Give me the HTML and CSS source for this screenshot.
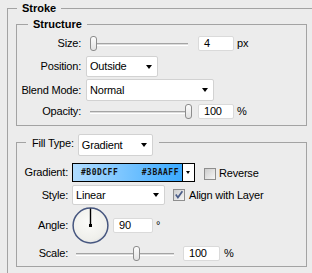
FILE: index.html
```html
<!DOCTYPE html>
<html lang="en">
<head>
    <meta charset="UTF-8">
    <title>Stroke</title>
    <link rel="stylesheet" href="styles.css">
</head>
<body>
    <fieldset class="group outer">
        <legend class="title outer-title">Stroke</legend>

        <fieldset class="group structure">
            <legend class="title structure-title">Structure</legend>

            <div class="row h-size">
                <label class="lbl">Size:</label>
                <div class="slider"><span class="thumb" style="left:0px"></span></div>
                <div class="field">4</div>
                <span class="unit">px</span>
            </div>
            <div class="row h-pos">
                <label class="lbl">Position:</label>
                <div class="select sel-pos">Outside</div>
            </div>
            <div class="row h-blend">
                <label class="lbl">Blend Mode:</label>
                <div class="select sel-blend">Normal</div>
            </div>
            <div class="row h-opacity">
                <label class="lbl">Opacity:</label>
                <div class="slider"><span class="thumb" style="left:95px"></span></div>
                <div class="field">100</div>
                <span class="unit">%</span>
            </div>
        </fieldset>

        <fieldset class="group fill">
            <legend class="fill-legend">
                <label class="fill-lbl">Fill Type:</label>
                <div class="select sel-fill">Gradient</div>
            </legend>

            <div class="row h-grad">
                <label class="lbl">Gradient:</label>
                <div class="gradient">
                    <div class="grad-bar"><span>#B0DCFF</span><span>#3BAAFF</span></div>
                    <div class="grad-arrow"></div>
                </div>
                <div class="opt opt-grad">
                    <span class="check"></span>
                    <span>Reverse</span>
                </div>
            </div>
            <div class="row h-style">
                <label class="lbl">Style:</label>
                <div class="select sel-style">Linear</div>
                <div class="opt opt-style">
                    <span class="check">
                        <svg width="10" height="10" viewBox="0 0 10 10">
                            <path d="M1.8 4.6 L3.9 7.6 L8.4 1.2" fill="none" stroke="#4a5c88" stroke-width="1.7"/>
                        </svg>
                    </span>
                    <span>Align with Layer</span>
                </div>
            </div>
            <div class="row h-angle">
                <label class="lbl">Angle:</label>
                <svg class="dial" width="37" height="37" viewBox="0 0 37 37">
                    <defs>
                        <radialGradient id="dialFill" cx="45%" cy="40%" r="65%">
                            <stop offset="0" stop-color="#fbfbf9"/>
                            <stop offset="0.8" stop-color="#efefeb"/>
                            <stop offset="1" stop-color="#d9dbe0"/>
                        </radialGradient>
                    </defs>
                    <circle cx="18.5" cy="18.5" r="17.4" fill="url(#dialFill)" stroke="#46567f" stroke-width="1.5"/>
                    <line x1="18.5" y1="1.5" x2="18.5" y2="18.5" stroke="#000" stroke-width="1.4"/>
                    <rect x="17" y="17" width="3" height="3" fill="#000"/>
                </svg>
                <div class="field field-angle">90</div>
                <span class="unit">°</span>
            </div>
            <div class="row h-scale">
                <label class="lbl">Scale:</label>
                <div class="slider"><span class="thumb" style="left:57px"></span></div>
                <div class="field field-scale">100</div>
                <span class="unit unit-scale">%</span>
            </div>
        </fieldset>
    </fieldset>
</body>
</html>
```

FILE: styles.css
```css
html, body {
    margin: 0;
    overflow: hidden;
}
body {
    width: 312px;
    height: 273px;
    background-color: #ececec;
    font-family: "Liberation Sans", Arial, sans-serif;
    font-size: 11px;
    letter-spacing: -0.2px;
    color: #000;
}

/* group boxes */
.group {
    margin: 0;
    padding: 0;
    border: 1px solid #a3a3a3;
    min-width: 0;
}
.outer {
    box-sizing: border-box;
    width: 305px;
    margin: 2px 0 0 7px;
    padding-bottom: 6px;
    border-right: 0;
    border-bottom: 0;
}
.title {
    padding: 0 5px;
    font-weight: bold;
    line-height: 13px;
    letter-spacing: 0;
}
.outer-title {
    margin-left: 9px;
}
.structure-title {
    margin-left: 11px;
}
.structure, .fill {
    box-sizing: border-box;
    width: 291px;
    margin-left: 8px;
}
.structure {
    margin-top: 3px;
    padding: 1px 0 4px 0;
}
.fill {
    margin-top: 8px;
    padding: 12px 0 4px 0;
}
.fill-legend {
    display: flex;
    align-items: flex-start;
    height: 16px;
    margin-left: 9px;
    padding: 0 6px;
}
.fill-lbl {
    margin: 3px 4px 0 0;
    line-height: 13px;
}

/* rows */
.row {
    display: flex;
    align-items: center;
}
.h-size { height: 23px; }
.h-pos { height: 23px; }
.h-blend { height: 24px; }
.h-opacity { height: 19px; }
.h-grad { height: 21px; }
.h-style { height: 24px; }
.h-angle { height: 37px; }
.h-scale { height: 18px; }

.lbl {
    flex: none;
    text-align: right;
    line-height: 13px;
}
.structure .lbl {
    width: 64px;
    margin-right: 5px;
}
.fill .lbl {
    width: 51px;
    margin-right: 4px;
}

/* slider */
.slider {
    position: relative;
    flex: none;
    width: 102px;
    height: 15px;
    margin-left: 4px;
}
.slider::before {
    content: "";
    position: absolute;
    left: 0;
    right: 4px;
    top: 7px;
    height: 1px;
    border-top: 1px solid #a4a4a4;
    border-bottom: 1px solid #fff;
    background-color: #dcdcdc;
}
.thumb {
    position: absolute;
    top: 0;
    width: 7px;
    height: 15px;
    box-sizing: border-box;
    border: 1px solid #8c8c8c;
    border-radius: 3px;
    background: linear-gradient(#fdfdfd, #e2e2e2);
}

/* text field */
.field {
    flex: none;
    box-sizing: border-box;
    width: 36px;
    height: 15px;
    margin-left: 6px;
    padding-left: 5px;
    background-color: #fff;
    border: 1px solid #dadada;
    border-radius: 2px;
    line-height: 13px;
}
.field-angle {
    width: 40px;
    margin-left: 4px;
}
.field-scale {
    width: 37px;
    margin-left: 5px;
}
.unit {
    margin-left: 3px;
    line-height: 13px;
}
.unit-scale {
    margin-left: 4px;
}

/* dropdown */
.select {
    position: relative;
    flex: none;
    box-sizing: border-box;
    height: 21px;
    padding-left: 3px;
    background-color: #fff;
    border: 1px solid #d2d2d2;
    border-radius: 2px;
    line-height: 19px;
}
.select::after {
    content: "";
    position: absolute;
    right: 5px;
    top: 50%;
    margin-top: -2px;
    border-left: 3px solid transparent;
    border-right: 3px solid transparent;
    border-top: 4px solid #000;
}
.sel-pos { width: 72px; }
.sel-blend { width: 128px; height: 22px; line-height: 20px; }
.sel-fill { width: 75px; height: 22px; line-height: 20px; }
.sel-style { width: 93px; height: 20px; line-height: 18px; }

/* gradient swatch */
.gradient {
    display: flex;
    flex: none;
    box-sizing: border-box;
    width: 123px;
    height: 19px;
    border: 1px solid #000;
}
.grad-bar {
    flex: 1;
    display: flex;
    justify-content: space-between;
    align-items: center;
    padding: 0 3px 0 8px;
    background: linear-gradient(to right, #b0dcff, #3baaff);
    border-right: 1px solid #000;
    font-family: "DejaVu Sans Mono", monospace;
    font-weight: bold;
    font-size: 8px;
    letter-spacing: 0.5px;
    color: #111;
}
.grad-arrow {
    position: relative;
    width: 11px;
    background-color: #fff;
}
.grad-arrow::after {
    content: "";
    position: absolute;
    left: 3px;
    top: 7px;
    border-left: 2.5px solid transparent;
    border-right: 2.5px solid transparent;
    border-top: 3px solid #000;
}

/* checkbox */
.opt {
    display: flex;
    align-items: center;
    line-height: 13px;
}
.opt-grad {
    margin-left: 9px;
    padding-top: 2px;
}
.opt-style {
    margin-left: 8px;
}
.check {
    display: flex;
    align-items: center;
    justify-content: center;
    flex: none;
    box-sizing: border-box;
    width: 12px;
    height: 12px;
    margin-right: 3px;
    border: 1px solid #8e8e8e;
    background: linear-gradient(135deg, #cdcdcd, #f6f6f6);
}
.opt-style .check {
    margin-right: 4px;
}

.dial {
    flex: none;
}
```
